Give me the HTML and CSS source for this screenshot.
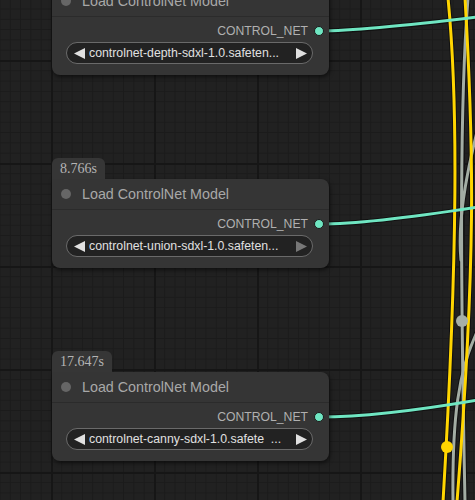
FILE: index.html
```html
<!DOCTYPE html>
<html lang="en">
<head>
  <meta charset="UTF-8">
  <meta name="viewport" content="width=device-width, initial-scale=1.0">
  <title>Workflow</title>
  <link rel="stylesheet" href="styles.css">
</head>
<body>
  <div class="graph">
    <!-- Links (drawn under the nodes) -->
    <svg class="links" width="475" height="500" viewBox="0 0 475 500">
      <g class="link-shadow">
        <path d="M320 31 C 360 31, 420 24, 478 17"/>
        <path d="M320 224 C 360 224, 420 216, 478 207"/>
        <path d="M320 417 C 360 417, 420 410, 478 400"/>
        <path d="M468 -2 C 460 100, 460 250, 465 502"/>
        <path d="M478 128 C 462 190, 458 230, 461 260"/>
        <path d="M478 330 C 458 370, 452 420, 453 502"/>
        <path d="M448 -2 C 458 100, 458 250, 443 502"/>
        <path d="M465 -2 C 474 150, 476 260, 457 502"/>
      </g>
      <g class="link-gray">
        <path d="M468 -2 C 460 100, 460 250, 465 502"/>
        <path d="M478 128 C 462 190, 458 230, 461 260"/>
        <path d="M478 330 C 458 370, 452 420, 453 502"/>
      </g>
      <g class="link-yellow">
        <path d="M448 -2 C 458 100, 458 250, 443 502"/>
        <path d="M465 -2 C 474 150, 476 260, 457 502"/>
      </g>
      <g class="link-teal">
        <path d="M320 31 C 360 31, 420 24, 478 17"/>
        <path d="M320 224 C 360 224, 420 216, 478 207"/>
        <path d="M320 417 C 360 417, 420 410, 478 400"/>
      </g>
      <circle class="dot-gray" cx="462" cy="321" r="6"/>
      <circle class="dot-yellow" cx="447" cy="447" r="6"/>
    </svg>

    <!-- Load ControlNet Model: depth -->
    <div class="node node-depth">
      <div class="node-body">
        <div class="node-title"><span class="status-dot"></span>Load ControlNet Model</div>
        <div class="node-output">CONTROL_NET<span class="slot"></span></div>
        <div class="combo">
          <svg class="arrow" width="11" height="11" viewBox="0 0 11 11"><polygon points="11,0 11,11 0,5.5"/></svg>
          <span class="combo-value">controlnet-depth-sdxl-1.0.safeten...</span>
          <svg class="arrow" width="11" height="11" viewBox="0 0 11 11"><polygon points="0,0 0,11 11,5.5"/></svg>
        </div>
      </div>
    </div>

    <!-- Load ControlNet Model: union -->
    <div class="node node-union">
      <div class="badge">8.766s</div>
      <div class="node-body">
        <div class="node-title"><span class="status-dot"></span>Load ControlNet Model</div>
        <div class="node-output">CONTROL_NET<span class="slot"></span></div>
        <div class="combo">
          <svg class="arrow" width="11" height="11" viewBox="0 0 11 11"><polygon points="11,0 11,11 0,5.5"/></svg>
          <span class="combo-value">controlnet-union-sdxl-1.0.safeten...</span>
          <svg class="arrow arrow-off" width="11" height="11" viewBox="0 0 11 11"><polygon points="0,0 0,11 11,5.5"/></svg>
        </div>
      </div>
    </div>

    <!-- Load ControlNet Model: canny -->
    <div class="node node-canny">
      <div class="badge">17.647s</div>
      <div class="node-body">
        <div class="node-title"><span class="status-dot"></span>Load ControlNet Model</div>
        <div class="node-output">CONTROL_NET<span class="slot"></span></div>
        <div class="combo">
          <svg class="arrow" width="11" height="11" viewBox="0 0 11 11"><polygon points="11,0 11,11 0,5.5"/></svg>
          <span class="combo-value">controlnet-canny-sdxl-1.0.safete&nbsp;&nbsp;...</span>
          <svg class="arrow" width="11" height="11" viewBox="0 0 11 11"><polygon points="0,0 0,11 11,5.5"/></svg>
        </div>
      </div>
    </div>
  </div>
</body>
</html>
```

FILE: styles.css
```css
/* Reset */
body, html {
  margin: 0;
  padding: 0;
  font-family: "Liberation Sans", Arial, sans-serif;
  overflow: hidden;
}

/* Canvas with the node grid */
.graph {
  position: relative;
  width: 475px;
  height: 500px;
  overflow: hidden;
  background-color: #212121;
  background-image:
    linear-gradient(#161616 2px, transparent 2px),
    linear-gradient(90deg, #161616 2px, transparent 2px),
    linear-gradient(#1b1b1b 1px, transparent 1px),
    linear-gradient(90deg, #1b1b1b 1px, transparent 1px);
  background-size: 103px 103px, 103px 103px, 10.3px 10.3px, 10.3px 10.3px;
  background-position: 51px 60px, 51px 60px, 51px 60px, 51px 60px;
}

/* Links */
.links {
  position: absolute;
  top: 0;
  left: 0;
}

.links path {
  fill: none;
  stroke-linecap: round;
}

.link-shadow path {
  stroke: #111;
  stroke-width: 5;
}

.link-teal path {
  stroke: #6fe6c2;
  stroke-width: 3;
}

.link-yellow path {
  stroke: #ffd500;
  stroke-width: 3;
}

.link-gray path {
  stroke: #a3ada4;
  stroke-width: 3;
}

.dot-gray { fill: #a6afa7; }
.dot-yellow { fill: #ffd500; }

/* Nodes */
.node {
  position: absolute;
  left: 52px;
  width: 277px;
}

.node-depth { top: -14px; }
.node-union { top: 158px; }
.node-canny { top: 351px; }

.badge {
  display: inline-block;
  height: 21px;
  line-height: 21px;
  padding: 0 8px;
  background: #363636;
  border-radius: 6px 6px 0 0;
  font-family: "Liberation Serif", "Times New Roman", serif;
  font-size: 14px;
  color: #b4b4b4;
  vertical-align: top;
}

.node-body {
  background: #353535;
  border-radius: 8px;
  padding-bottom: 11px;
  box-shadow: 1px 2px 4px rgba(0, 0, 0, 0.55);
}

.node-union .node-body,
.node-canny .node-body {
  border-top-left-radius: 0;
}

.node-title {
  display: flex;
  align-items: center;
  gap: 11px;
  height: 30px;
  padding-left: 9px;
  border-bottom: 1px solid #2b2b2b;
  font-size: 14.3px;
  color: #a8a8a8;
}

.status-dot {
  width: 10px;
  height: 10px;
  border-radius: 50%;
  background: #666;
}

.node-output {
  display: flex;
  align-items: center;
  justify-content: flex-end;
  gap: 6px;
  height: 20px;
  margin-top: 4px;
  padding-right: 5px;
  font-size: 12.2px;
  color: #b0b0b0;
}

.slot {
  width: 8px;
  height: 8px;
  border-radius: 50%;
  background: #6fe6c2;
  border: 1px solid #1a1a1a;
}

/* Combo widget */
.combo {
  display: flex;
  align-items: center;
  gap: 4px;
  height: 20px;
  margin: 1px 16px 0 14px;
  padding: 0 5px 0 7px;
  background: #222;
  border: 1px solid #6a6a6a;
  border-radius: 11px;
  font-size: 12.3px;
  color: #e0e0e0;
}

.combo-value {
  flex: 1;
  white-space: nowrap;
  overflow: hidden;
}

.arrow {
  fill: #e0e0e0;
  flex-shrink: 0;
}

.arrow-off {
  fill: #777;
}
```
